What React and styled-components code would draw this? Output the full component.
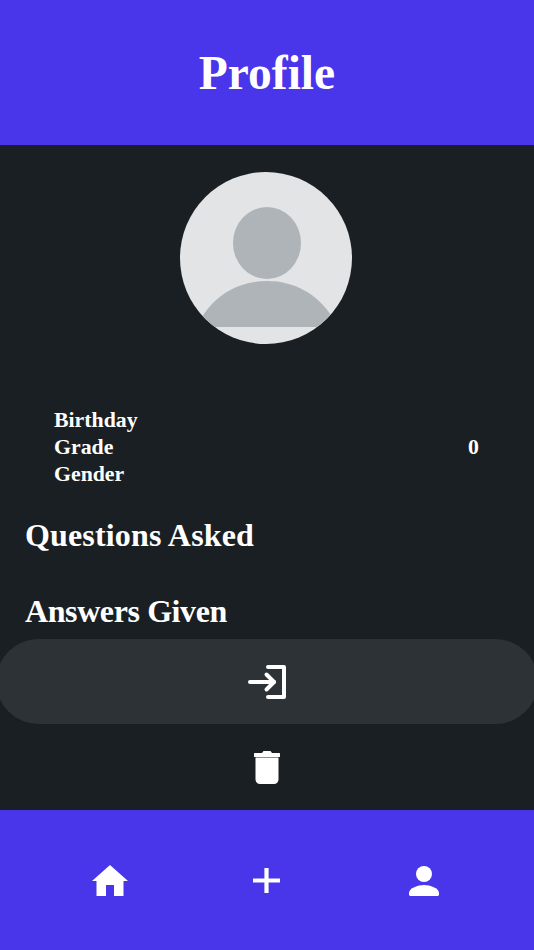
import React from 'react';
import styled, { createGlobalStyle } from 'styled-components';

const GlobalStyle = createGlobalStyle`
  html, body {
    margin: 0;
    padding: 0;
    background: #1a1f23;
  }
`;

const Page = styled.div`
  width: 534px;
  height: 950px;
  display: flex;
  flex-direction: column;
  overflow: hidden;
  color: #fff;
  font-family: "Liberation Serif", "Times New Roman", serif;
  font-weight: 700;
`;

const Header = styled.header`
  height: 145px;
  flex: none;
  background: #4935ea;
  display: flex;
  align-items: center;
  justify-content: center;
  padding-top: 2px;
  box-sizing: border-box;
`;

const Title = styled.h1`
  margin: 0;
  font-size: 47.5px;
  line-height: 1;
`;

const Main = styled.main`
  flex: 1;
  display: flex;
  flex-direction: column;
  background: #1a1f23;
`;

const AvatarRow = styled.div`
  display: flex;
  justify-content: center;
  padding: 27px 2px 0 0;
  height: 262px;
  box-sizing: border-box;
`;

const InfoGrid = styled.div`
  display: grid;
  grid-template-columns: 1fr auto;
  padding: 0 55px 0 54px;
  font-size: 21.8px;
  line-height: 27px;
`;

const SectionTitle = styled.h2`
  margin: 0;
  padding-left: 25px;
  font-size: 32px;
  line-height: 40px;
  margin-top: ${(p) => p.$top}px;
  letter-spacing: ${(p) => p.$spacing || 0}px;
`;

const LoginButton = styled.button`
  margin: 8px -4px 0;
  height: 85px;
  flex: none;
  border: none;
  border-radius: 42.5px;
  background: #2d3236;
  display: flex;
  align-items: center;
  justify-content: center;
  padding: 0;
`;

const TrashButton = styled.button`
  flex: 1;
  border: none;
  background: transparent;
  display: flex;
  align-items: center;
  justify-content: center;
  padding: 0;
`;

const Footer = styled.nav`
  height: 140px;
  flex: none;
  background: #4935ea;
  display: grid;
  grid-template-columns: repeat(3, 1fr);
  align-items: center;
  justify-items: center;
  padding: 1px 32px 0;
  box-sizing: border-box;
`;

const NavItem = styled.div`
  display: flex;
  align-items: center;
  justify-content: center;
`;

const Avatar = () => (
  <svg width="172" height="172" viewBox="0 0 172 172">
    <defs>
      <clipPath id="face">
        <circle cx="86" cy="86" r="86" />
      </clipPath>
    </defs>
    <circle cx="86" cy="86" r="86" fill="#e2e4e6" />
    <ellipse cx="87" cy="71" rx="34" ry="36" fill="#aeb4b8" />
    <path d="M22 145C36 122 60 109 87 109S138 122 152 145L143 155H32Z" fill="#aeb4b8" clipPath="url(#face)" />
  </svg>
);

const LoginIcon = () => (
  <svg width="38" height="34" viewBox="0 0 38 34" fill="none" stroke="#fff" strokeWidth="4" strokeLinecap="round" strokeLinejoin="round">
    <path d="M20 2H36V32H20" />
    <path d="M2 17H26" />
    <path d="M18.500 9.500L26 17L18.500 24.500" />
  </svg>
);

const TrashIcon = () => (
  <svg width="28" height="34" viewBox="0 0 28 34" fill="#fff">
    <path d="M1 4C1 3.400 1.400 3 2 3H9L10.500 1H17.500L19 3H26C26.600 3 27 3.400 27 4V7H1Z" />
    <path d="M2.500 7.600H25.500V29.500C25.500 32 23.500 34 21 34H7C4.500 34 2.500 32 2.500 29.500Z" />
  </svg>
);

const HomeIcon = () => (
  <svg width="36" height="31" viewBox="0 0 36 31" fill="#fff">
    <path d="M18 0L36 16H31.500V31H22V20H14V31H4.500V16H0Z" />
  </svg>
);

const PlusIcon = () => (
  <svg width="27" height="25" viewBox="0 0 27 25" fill="#fff">
    <path d="M11.400 0H15.600V10.400H27V14.600H15.600V25H11.400V14.600H0V10.400H11.400Z" />
  </svg>
);

const PersonIcon = () => (
  <svg width="30" height="30" viewBox="0 0 30 30" fill="#fff">
    <circle cx="15" cy="8" r="8" />
    <path d="M0 27C0 22 9 19 15 19S30 22 30 27V28.500C30 29.300 29.300 30 28.500 30H1.500C0.700 30 0 29.300 0 28.500Z" />
  </svg>
);

const App = () => (
  <Page>
    <GlobalStyle />
    <Header>
      <Title>Profile</Title>
    </Header>
    <Main>
      <AvatarRow>
        <Avatar />
      </AvatarRow>
      <InfoGrid>
        <span>Birthday</span>
        <span />
        <span>Grade</span>
        <span>0</span>
        <span>Gender</span>
        <span />
      </InfoGrid>
      <SectionTitle $top={27} $spacing={0.15}>Questions Asked</SectionTitle>
      <SectionTitle $top={36} $spacing={-0.4}>Answers Given</SectionTitle>
      <LoginButton aria-label="Log in">
        <LoginIcon />
      </LoginButton>
      <TrashButton aria-label="Delete">
        <TrashIcon />
      </TrashButton>
    </Main>
    <Footer>
      <NavItem><HomeIcon /></NavItem>
      <NavItem><PlusIcon /></NavItem>
      <NavItem><PersonIcon /></NavItem>
    </Footer>
  </Page>
);

export default App;
